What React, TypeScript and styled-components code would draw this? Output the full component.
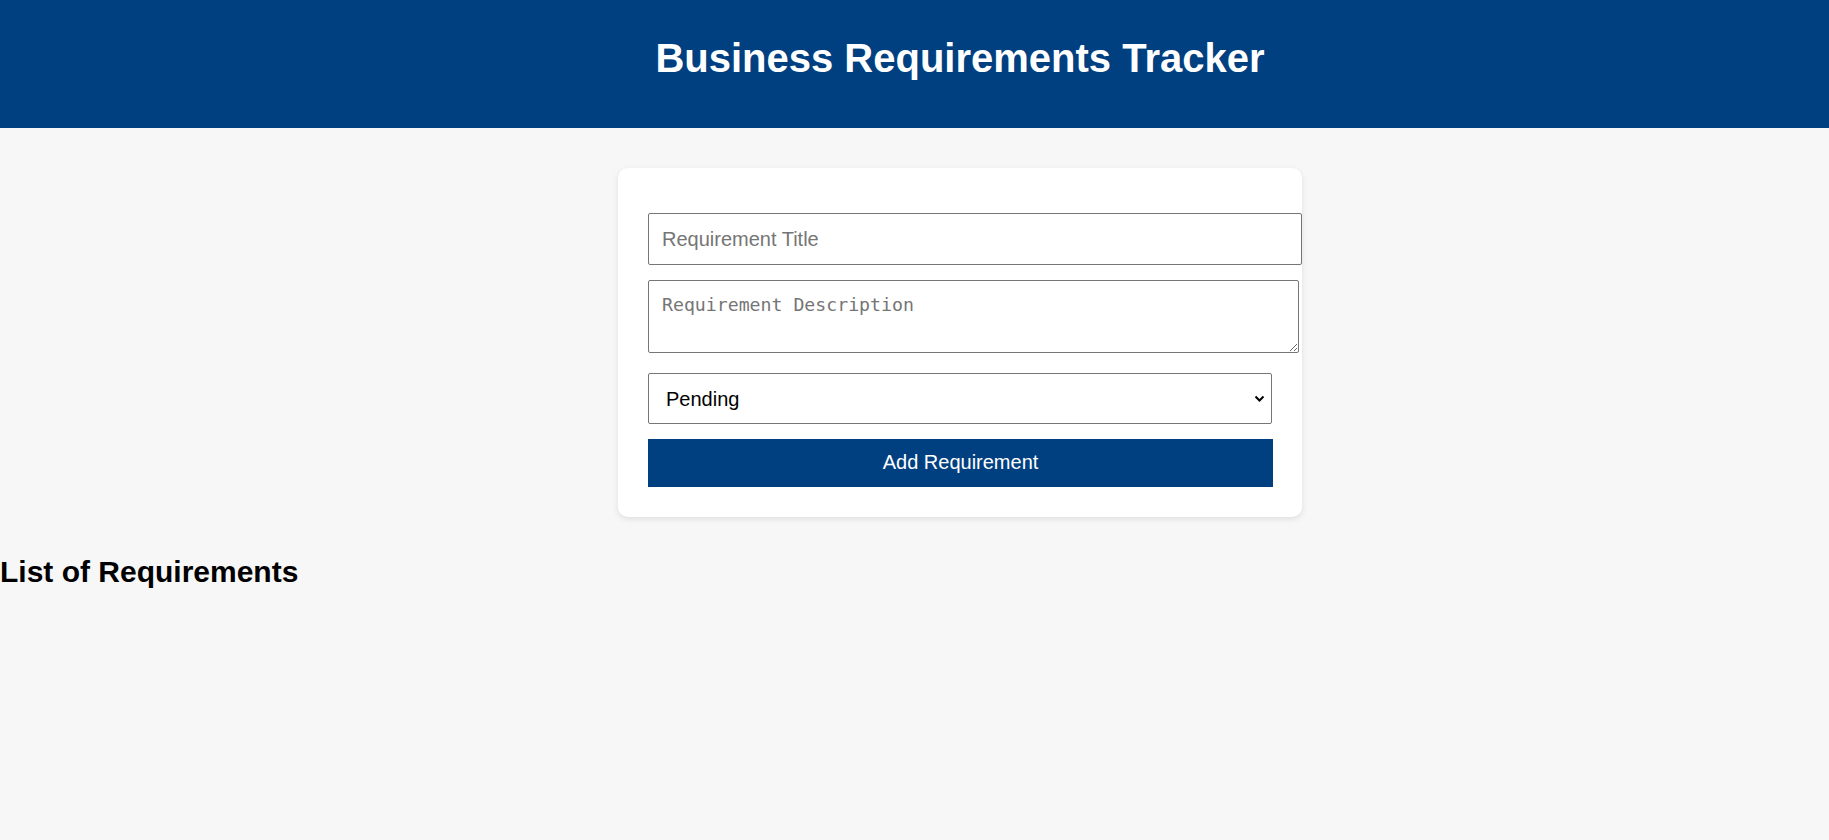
import React from "react";
import styled, { createGlobalStyle } from "styled-components";

const GlobalStyle = createGlobalStyle`
  html, body {
    margin: 0;
    padding: 0;
    background: #f7f7f7;
    font-family: "Liberation Sans", Arial, sans-serif;
  }
  * { box-sizing: border-box; }
`;

const Header = styled.header`
  background: #004080;
  color: #ffffff;
  height: 128px;
  padding: 35px 0 0 91px;
  text-align: center;
`;

const Title = styled.h1`
  margin: 0;
  font-size: 40px;
  line-height: 46px;
  font-weight: bold;
`;

const Main = styled.main`
  padding: 40px 0 0 91px;
`;

const Card = styled.section`
  width: 684px;
  margin: 0 auto;
  padding: 45px 30px 30px;
  background: #ffffff;
  border-radius: 10px;
  box-shadow: 0 2px 6px rgba(0, 0, 0, 0.1);
`;

const Form = styled.form`
  display: flex;
  flex-direction: column;
  align-items: flex-start;
`;

const fieldBase = `
  border: 1px solid #767676;
  border-radius: 2px;
  background: #ffffff;
  color: #000000;
  outline: none;
`;

const TextInput = styled.input`
  ${fieldBase}
  width: 654px;
  height: 52px;
  padding: 0 13px;
  font-family: "Liberation Sans", Arial, sans-serif;
  font-size: 20px;
  &::placeholder { color: #757575; }
`;

const TextArea = styled.textarea`
  ${fieldBase}
  width: 651px;
  height: 73px;
  margin-top: 15px;
  padding: 12px 13px;
  font-family: "DejaVu Sans Mono", "Liberation Mono", monospace;
  font-size: 18.2px;
  line-height: 23px;
  &::placeholder { color: #757575; }
`;

const SelectWrap = styled.div`
  position: relative;
  width: 624px;
  margin-top: 20px;
`;

const Select = styled.select`
  ${fieldBase}
  appearance: none;
  -webkit-appearance: none;
  width: 100%;
  height: 51px;
  padding: 0 40px 0 17px;
  font-family: "Liberation Sans", Arial, sans-serif;
  font-size: 20px;
`;

const Chevron = styled.svg`
  position: absolute;
  right: 7px;
  top: 22px;
  width: 11px;
  height: 8px;
  pointer-events: none;
`;

const AddButton = styled.button`
  width: 625px;
  height: 48px;
  margin-top: 15px;
  padding: 0 0 2px;
  border: none;
  border-radius: 0;
  background: #004080;
  color: #ffffff;
  font-family: "Liberation Sans", Arial, sans-serif;
  font-size: 20px;
  cursor: pointer;
`;

const ListHeading = styled.h2`
  margin: 38px 0 0;
  font-size: 30px;
  line-height: 34px;
  font-weight: bold;
  color: #000000;
`;

export default function App() {
  return (
    <>
      <GlobalStyle />
      <Header>
        <Title>Business Requirements Tracker</Title>
      </Header>
      <Main>
        <Card>
          <Form onSubmit={(e) => e.preventDefault()}>
            <TextInput type="text" placeholder="Requirement Title" />
            <TextArea placeholder="Requirement Description" />
            <SelectWrap>
              <Select defaultValue="Pending">
                <option>Pending</option>
                <option>In Progress</option>
                <option>Completed</option>
              </Select>
              <Chevron viewBox="0 0 11 8">
                <path d="M1.5 1.5 L5.5 5.5 L9.5 1.5" fill="none" stroke="#000" strokeWidth="2" />
              </Chevron>
            </SelectWrap>
            <AddButton type="submit">Add Requirement</AddButton>
          </Form>
        </Card>
      </Main>
      <ListHeading>List of Requirements</ListHeading>
    </>
  );
}
